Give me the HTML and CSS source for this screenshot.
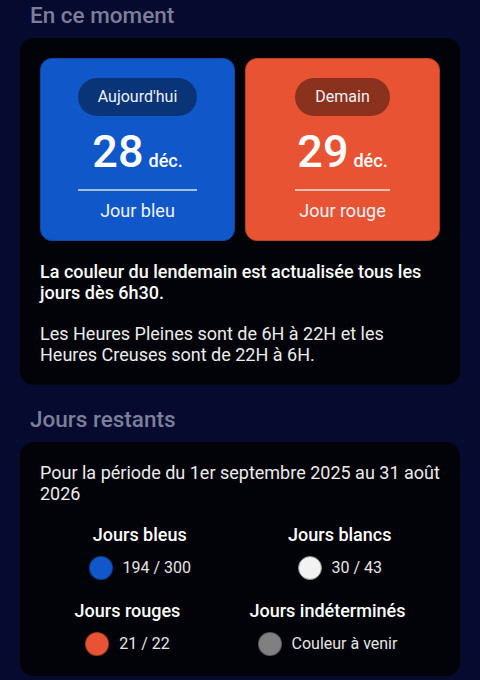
FILE: index.html
```html
<!DOCTYPE html>
<html lang="fr">
<head>
<meta charset="utf-8">
<title>Tempo</title>
<link rel="stylesheet" href="styles.css">
</head>
<body>
<main class="page">
  <section class="section">
    <h2 class="section-title">En ce moment</h2>
    <div class="card">
      <div class="days">
        <div class="day day-blue">
          <div class="day-body">
            <span class="pill">Aujourd'hui</span>
            <div class="date"><span class="date-num">28</span><span class="date-month">déc.</span></div>
            <hr class="divider">
            <div class="day-label">Jour bleu</div>
          </div>
        </div>
        <div class="day day-red">
          <div class="day-body">
            <span class="pill">Demain</span>
            <div class="date"><span class="date-num">29</span><span class="date-month">déc.</span></div>
            <hr class="divider">
            <div class="day-label">Jour rouge</div>
          </div>
        </div>
      </div>
      <p class="note note-strong">La couleur du lendemain est actualisée tous les jours dès 6h30.</p>
      <p class="note">Les Heures Pleines sont de 6H à 22H et les Heures Creuses sont de 22H à 6H.</p>
    </div>
  </section>

  <section class="section section-next">
    <h2 class="section-title">Jours restants</h2>
    <div class="card">
      <p class="note">Pour la période du 1er septembre 2025 au 31 août 2026</p>
      <div class="stats">
        <div class="stats-row">
          <div class="stat">
            <div class="stat-title">Jours bleus</div>
            <div class="stat-value"><span class="dot dot-blue"></span><span>194 / 300</span></div>
          </div>
          <div class="stat">
            <div class="stat-title">Jours blancs</div>
            <div class="stat-value"><span class="dot dot-white"></span><span>30 / 43</span></div>
          </div>
        </div>
        <div class="stats-row">
          <div class="stat">
            <div class="stat-title">Jours rouges</div>
            <div class="stat-value"><span class="dot dot-red"></span><span>21 / 22</span></div>
          </div>
          <div class="stat">
            <div class="stat-title">Jours indéterminés</div>
            <div class="stat-value"><span class="dot dot-grey"></span><span>Couleur à venir</span></div>
          </div>
        </div>
      </div>
    </div>
  </section>
</main>
</body>
</html>
```

FILE: styles.css
```css
* { box-sizing: border-box; }

html, body {
  margin: 0;
  padding: 0;
  background: #050a2e;
}

body {
  font-family: Roboto, "Liberation Sans", Arial, sans-serif;
  color: #ececec;
}

.page {
  padding: 1px 20px 0;
  display: flex;
  flex-direction: column;
}

.section-next {
  margin-top: 20px;
}

.section-title {
  margin: 0 0 9px;
  padding-left: 10px;
  font-size: 22.5px;
  line-height: 28px;
  font-weight: 500;
  color: #7b7f99;
}

.card {
  background: #020308;
  border-radius: 14px;
  padding: 20px;
}

.days {
  display: flex;
  gap: 10px;
  margin-bottom: 20px;
}

.day {
  flex: 1;
  border-radius: 12px;
  border: 1px solid;
  padding: 19px 0 19px;
  display: flex;
  justify-content: center;
  color: #f0f3fa;
}

.day-blue {
  background: #1058c9;
  border-color: #0c48a6;
}

.day-red {
  background: #e85433;
  border-color: #b9411f;
}

.day-body {
  display: flex;
  flex-direction: column;
  align-items: stretch;
  text-align: center;
}

.pill {
  display: block;
  height: 38px;
  line-height: 38px;
  padding: 0 20px;
  border-radius: 19px;
  background: rgba(0, 0, 0, 0.4);
  font-size: 16px;
  color: #eef1f8;
  white-space: nowrap;
}

.date {
  margin-top: 14px;
  height: 44px;
  line-height: 44px;
  text-align: center;
  white-space: nowrap;
  color: #ffffff;
}

.date-num {
  font-size: 45px;
  font-weight: 500;
}

.date-month {
  font-size: 18px;
  line-height: 18px;
  font-weight: 500;
  margin-left: 5px;
}

.divider {
  margin: 15px 0 0;
  border: 0;
  height: 2px;
  background: rgba(255, 255, 255, 0.62);
}

.day-label {
  margin-top: 9px;
  font-size: 18px;
  line-height: 21px;
}

.note {
  margin: 0;
  font-size: 18px;
  line-height: 21px;
  color: #ececec;
}

.note-strong {
  font-weight: 500;
  color: #ffffff;
  margin-bottom: 20px;
}

.stats {
  margin-top: 20px;
  display: flex;
  flex-direction: column;
  gap: 20px;
}

.stats-row {
  display: flex;
}

.stat {
  flex: auto;
  display: flex;
  flex-direction: column;
  align-items: center;
  gap: 11px;
}

.stat-title {
  font-size: 18px;
  line-height: 21px;
  font-weight: 500;
  color: #ffffff;
  white-space: nowrap;
}

.stat-value {
  display: flex;
  align-items: center;
  gap: 10px;
  font-size: 16px;
  line-height: 20px;
  color: #e6e6e6;
  white-space: nowrap;
}

.dot {
  width: 24px;
  height: 24px;
  border-radius: 50%;
  border: 1.5px solid rgba(0, 0, 0, 0.3);
  flex: none;
}

.dot-blue { background: #1058c9; }
.dot-white { background: #f2f2f2; border-color: #8a8a8a; }
.dot-red { background: #e85433; }
.dot-grey { background: #808080; }
```
